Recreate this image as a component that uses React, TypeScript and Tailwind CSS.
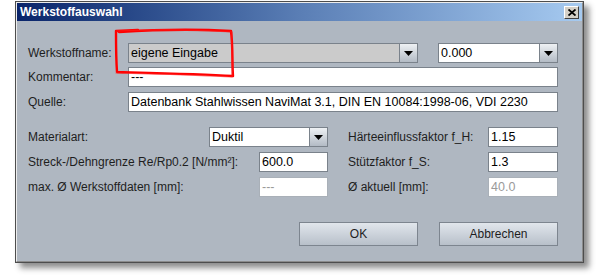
import React from 'react';

const Arrow = () => (
  <div className="w-[18px] h-full border-l border-[#7a828b] bg-gradient-to-b from-[#eef1f4] to-[#b3bbc5] flex items-center justify-center">
    <svg width="9" height="5" viewBox="0 0 9 5">
      <path d="M0 0 L9 0 L4.5 5 Z" fill="#000" />
    </svg>
  </div>
);

const Combo = ({ value, width, gray }: { value: string; width: string; gray?: boolean }) => (
  <div className={`${width} h-[20px] flex border border-[#7a828b] ${gray ? 'bg-[#cbcbcb]' : 'bg-white'}`}>
    <div className="flex-1 flex items-center pl-[2px] text-[12.5px] text-black truncate">{value}</div>
    <Arrow />
  </div>
);

const Field = ({ value, width, disabled }: { value: string; width: string; disabled?: boolean }) => (
  <div
    className={`${width} h-[20px] flex items-center pl-[2px] bg-white border text-[12.5px] truncate ${
      disabled ? 'border-[#a9b0b8] text-[#9a9a9a]' : 'border-[#7a828b] text-black'
    }`}
  >
    {value}
  </div>
);

const Label = ({ children, width }: { children: React.ReactNode; width?: string }) => (
  <div className={`${width ?? ''} text-[12px] text-[#1e1e1e] whitespace-nowrap`}>{children}</div>
);

const Button = ({ children }: { children: React.ReactNode }) => (
  <button className="w-[119px] h-[24px] border border-[#7d858f] bg-gradient-to-b from-[#e1e6ec] to-[#b8c0ca] text-[12px] text-[#1e1e1e]">
    {children}
  </button>
);

export default function App() {
  return (
    <div className="relative w-[600px] h-[280px] bg-white overflow-hidden font-['Liberation_Sans',Arial,sans-serif]">
      <div className="ml-[15px] mt-[1px] w-[569px] h-[262px] border border-[#4d4d4d] shadow-[5px_5px_6px_rgba(0,0,0,0.45)]">
        <div className="h-full flex flex-col border border-t-[#ececec] border-l-[#ececec] border-r-[#8c8c8c] border-b-[#8c8c8c] bg-[#afb7c1]">
          {/* title bar */}
          <div className="h-[18px] flex items-center justify-between bg-gradient-to-r from-[#0a246a] via-[#5a7eb5] to-[#a6caf0] pl-[3px] pr-[3px]">
            <span className="text-white font-bold text-[12px]">Werkstoffauswahl</span>
            <div className="w-[15px] h-[13px] bg-[#d4d0c8] border border-t-white border-l-white border-r-[#404040] border-b-[#404040] flex items-center justify-center">
              <svg width="8" height="7" viewBox="0 0 8 7">
                <path d="M0.5 0.5 L7.5 6.5 M7.5 0.5 L0.5 6.5" stroke="#000" strokeWidth="1.8" />
              </svg>
            </div>
          </div>

          <div className="flex-1 flex flex-col pt-[22px] pl-[11px]">
            <div className="flex items-center">
              <Label width="w-[100px]">Werkstoffname:</Label>
              <Combo value="eigene Eingabe" width="w-[290px]" gray />
              <div className="ml-[20px]">
                <Combo value="0.000" width="w-[120px]" />
              </div>
            </div>
            <div className="flex items-center mt-[4px]">
              <Label width="w-[100px]">Kommentar:</Label>
              <Field value="---" width="w-[430px]" />
            </div>
            <div className="flex items-center mt-[5px]">
              <Label width="w-[100px]">Quelle:</Label>
              <Field value="Datenbank Stahlwissen NaviMat 3.1, DIN EN 10084:1998-06, VDI 2230" width="w-[430px]" />
            </div>

            <div className="flex mt-[15px]">
              <div className="w-[300px] flex flex-col gap-[5px]">
                <div className="flex items-center justify-between">
                  <Label>Materialart:</Label>
                  <Combo value="Duktil" width="w-[119px]" />
                </div>
                <div className="flex items-center justify-between">
                  <Label>Streck-/Dehngrenze Re/Rp0.2 [N/mm²]:</Label>
                  <Field value="600.0" width="w-[69px]" />
                </div>
                <div className="flex items-center justify-between">
                  <Label>max. Ø Werkstoffdaten [mm]:</Label>
                  <Field value="---" width="w-[69px]" disabled />
                </div>
              </div>
              <div className="ml-[20px] w-[210px] flex flex-col gap-[5px]">
                <div className="flex items-center justify-between">
                  <Label>Härteeinflussfaktor f_H:</Label>
                  <Field value="1.15" width="w-[70px]" />
                </div>
                <div className="flex items-center justify-between">
                  <Label>Stützfaktor f_S:</Label>
                  <Field value="1.3" width="w-[70px]" />
                </div>
                <div className="flex items-center justify-between">
                  <Label>Ø aktuell [mm]:</Label>
                  <Field value="40.0" width="w-[70px]" disabled />
                </div>
              </div>
            </div>

            <div className="flex justify-end gap-[21px] pr-[24px] mt-[25px]">
              <Button>OK</Button>
              <Button>Abbrechen</Button>
            </div>
          </div>
        </div>
      </div>

      {/* red hand-drawn highlight */}
      <svg className="absolute left-[110px] top-[26px]" width="130" height="56" viewBox="0 0 130 56">
        <path
          d="M9 6 C40 4, 85 3, 121 5 C123 20, 122 36, 123 50 C90 48, 45 47, 7 46 C6 32, 6 18, 6 5 L28 4"
          fill="none"
          stroke="#ff0000"
          strokeWidth="2.4"
          strokeLinecap="round"
          strokeLinejoin="round"
        />
        <path
          d="M7 5 C45 3, 90 4, 122 6 M122 6 C121 22, 123 38, 122 51 M122 51 C88 49, 40 48, 6 47"
          fill="none"
          stroke="#ff2020"
          strokeOpacity="0.6"
          strokeWidth="1.2"
          strokeLinecap="round"
        />
      </svg>
    </div>
  );
}
